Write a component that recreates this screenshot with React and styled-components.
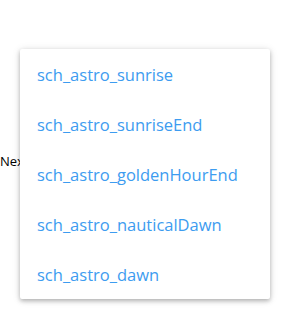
import { createGlobalStyle, styled } from 'styled-components';

const GlobalStyle = createGlobalStyle`
  html, body {
    margin: 0;
    padding: 0;
    background: #ffffff;
  }
  body {
    font-family: "Open Sans", "Liberation Sans", sans-serif;
  }
`;

const items = [
  'sch_astro_sunrise',
  'sch_astro_sunriseEnd',
  'sch_astro_goldenHourEnd',
  'sch_astro_nauticalDawn',
  'sch_astro_dawn',
];

export default function App() {
  return (
    <Page>
      <GlobalStyle />
      <NextLabel>Next</NextLabel>
      <Menu>
        {items.map((item) => (
          <MenuItem key={item}>{item}</MenuItem>
        ))}
      </Menu>
    </Page>
  );
}

const Page = styled.div`
  position: relative;
  width: 281px;
  height: 318px;
  overflow: hidden;
`;
const NextLabel = styled.span`
  position: absolute;
  left: 0;
  top: 152px;
  font-size: 13px;
  color: #000000;
  font-family: "Open Sans", "Liberation Sans", sans-serif;
`;
const Menu = styled.ul`
  position: absolute;
  left: 20px;
  top: 49px;
  width: 250px;
  margin: 0;
  padding: 0;
  list-style: none;
  background: #ffffff;
  border-radius: 2px;
  box-shadow: 0 2px 4px rgba(0, 0, 0, 0.25), 0 1px 8px rgba(0, 0, 0, 0.12);
`;
const MenuItem = styled.li`
  display: flex;
  align-items: center;
  height: 50px;
  padding: 0 17px;
  font-size: 16.5px;
  color: #3d9cf0;
  cursor: pointer;
`;
